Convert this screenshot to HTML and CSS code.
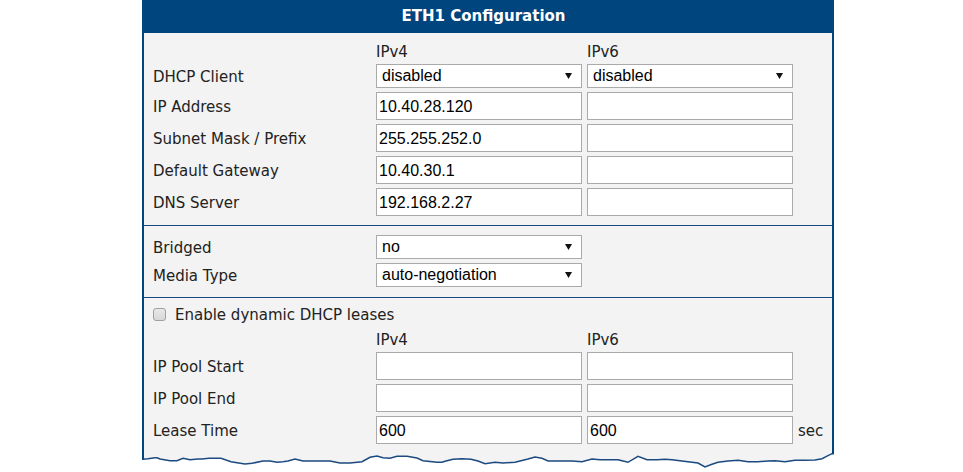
FILE: index.html
```
<!DOCTYPE html>
<html>
<head>
<meta charset="utf-8">
<link rel="stylesheet" href="styles.css">
</head>
<body>
<div class="panel">
  <div class="head">ETH1 Configuration</div>
  <div class="body">
    <div class="section s1">
      <div class="grid">
        <div></div><div class="colhead">IPv4</div><div class="colhead">IPv6</div><div></div>
        <div class="label">DHCP Client</div>
        <div class="select"><span>disabled</span><svg class="arrow" width="7" height="6" viewBox="0 0 7 6"><polygon points="0,0 7,0 3.5,6" fill="#111"/></svg></div>
        <div class="select"><span>disabled</span><svg class="arrow" width="7" height="6" viewBox="0 0 7 6"><polygon points="0,0 7,0 3.5,6" fill="#111"/></svg></div>
        <div></div>
        <div class="label">IP Address</div><div class="input">10.40.28.120</div><div class="input"></div><div></div>
        <div class="label">Subnet Mask / Prefix</div><div class="input">255.255.252.0</div><div class="input"></div><div></div>
        <div class="label">Default Gateway</div><div class="input">10.40.30.1</div><div class="input"></div><div></div>
        <div class="label">DNS Server</div><div class="input">192.168.2.27</div><div class="input"></div><div></div>
      </div>
    </div>
    <div class="section s2">
      <div class="grid">
        <div class="label">Bridged</div>
        <div class="select"><span>no</span><svg class="arrow" width="7" height="6" viewBox="0 0 7 6"><polygon points="0,0 7,0 3.5,6" fill="#111"/></svg></div>
        <div></div><div></div>
        <div class="label">Media Type</div>
        <div class="select"><span>auto-negotiation</span><svg class="arrow" width="7" height="6" viewBox="0 0 7 6"><polygon points="0,0 7,0 3.5,6" fill="#111"/></svg></div>
        <div></div><div></div>
      </div>
    </div>
    <div class="section s3">
      <div class="grid">
        <label class="check"><input type="checkbox" class="box"><span>Enable dynamic DHCP leases</span></label>
        <div></div><div class="colhead">IPv4</div><div class="colhead">IPv6</div><div></div>
        <div class="label">IP Pool Start</div><div class="input"></div><div class="input"></div><div></div>
        <div class="label">IP Pool End</div><div class="input"></div><div class="input"></div><div></div>
        <div class="label">Lease Time</div><div class="input">600</div><div class="input">600</div><div class="unit">sec</div>
      </div>
    </div>
  </div>
  <svg class="torn" width="692" height="16" viewBox="0 0 692 16">
    <polygon fill="#f3f3f3" points="0,0 692,0 692,0.7 690,0.7 686,2.7 680,5.7 673,7 663,7.3 653,7.3 643,8.7 633,7.8 626,8 616,8.7 606,8.7 596,7.3 586,8 576,9.3 570,11.3 563,14 556,10 550,9.3 540,8 530,6.7 523,6.3 515,6.7 505,6.7 496,3.3 486,9.3 476,6.7 470,6.7 458,6.7 450,6 440,8.7 430,8 423,8 413,8 406,8 400,5.3 393,4 386,6 373,9.3 361,10 353,9.3 343,10.7 336,8 329,6.3 320,5.7 311,6.3 303,8.3 300,9.3 295,9.3 281,7.7 275,5 265,3.3 255,3.3 248,5.3 241,4.7 235,3 228,4.3 220,8.7 208,10 198,10 188,8 181,8 168,8 161,8 153,6 146,8 141,8.7 135,9.3 128,8 121,8 110,10.3 103,11 95,9.7 89,8.7 79,5.3 67,5.3 60,6 56,6 48,6.7 41,5.3 35,7.7 28,7.7 18,6 15,4.7 13,4.7 6,5.7 0,6.3"/>
    <polyline fill="none" stroke="#1b4a80" stroke-width="1.5" points="692,0 692,0.7 690,0.7 686,2.7 680,5.7 673,7 663,7.3 653,7.3 643,8.7 633,7.8 626,8 616,8.7 606,8.7 596,7.3 586,8 576,9.3 570,11.3 563,14 556,10 550,9.3 540,8 530,6.7 523,6.3 515,6.7 505,6.7 496,3.3 486,9.3 476,6.7 470,6.7 458,6.7 450,6 440,8.7 430,8 423,8 413,8 406,8 400,5.3 393,4 386,6 373,9.3 361,10 353,9.3 343,10.7 336,8 329,6.3 320,5.7 311,6.3 303,8.3 300,9.3 295,9.3 281,7.7 275,5 265,3.3 255,3.3 248,5.3 241,4.7 235,3 228,4.3 220,8.7 208,10 198,10 188,8 181,8 168,8 161,8 153,6 146,8 141,8.7 135,9.3 128,8 121,8 110,10.3 103,11 95,9.7 89,8.7 79,5.3 67,5.3 60,6 56,6 48,6.7 41,5.3 35,7.7 28,7.7 18,6 15,4.7 13,4.7 6,5.7 0,6.3"/>
    <line x1="1" y1="0" x2="1" y2="6.5" stroke="#00457e" stroke-width="2"/>
    <line x1="691" y1="0" x2="691" y2="1" stroke="#00457e" stroke-width="2"/>
  </svg>
</div>
</body>
</html>
```
FILE: styles.css
```
html, body {
  margin: 0;
  padding: 0;
  background: #ffffff;
}
.panel {
  margin-left: 142px;
  width: 692px;
  font-family: "DejaVu Sans", Verdana, sans-serif;
  font-size: 15px;
  color: #222;
}
.head {
  height: 33px;
  background: #00457e;
  color: #fff;
  font-weight: bold;
  font-size: 15px;
  line-height: 33px;
  text-align: center;
  padding-right: 9px;
}
.body {
  background: #f3f3f3;
  border-left: 2px solid #00457e;
  border-right: 2px solid #00457e;
}
.section {
  padding-left: 9px;
}
.s1 {
  padding-top: 9px;
  padding-bottom: 9px;
  border-bottom: 1px solid #1b4a80;
}
.s2 {
  padding-top: 9px;
  padding-bottom: 10px;
  border-bottom: 1px solid #1b4a80;
}
.s3 {
  padding-top: 5px;
  padding-bottom: 10px;
}
.grid {
  display: grid;
  grid-template-columns: 218px 206px 206px auto;
  column-gap: 5px;
  row-gap: 4px;
  align-items: center;
}
.colhead {
  height: 18px;
  line-height: 20px;
}
.label {
  line-height: 20px;
  padding-top: 2px;
}
.select {
  box-sizing: border-box;
  height: 24px;
  background: #fff;
  border: 1px solid #aaa;
  display: flex;
  align-items: center;
  justify-content: space-between;
  padding: 0 9px 0 5px;
  font-family: "Liberation Sans", Arial, sans-serif;
  font-size: 16px;
  color: #000;
}
.arrow {
  display: block;
}
.input {
  box-sizing: border-box;
  height: 28px;
  background: #fff;
  border: 1px solid #aaa;
  padding: 0 2px;
  line-height: 27px;
  font-family: "Liberation Sans", Arial, sans-serif;
  font-size: 16px;
  color: #000;
}
.unit {
  line-height: 20px;
  padding-top: 2px;
}
.check {
  grid-column: 1 / -1;
  height: 23px;
  display: flex;
  align-items: center;
}
.box {
  appearance: none;
  -webkit-appearance: none;
  box-sizing: border-box;
  width: 13px;
  height: 13px;
  margin: 0 9px 0 0;
  border: 1px solid #a0a0a0;
  border-radius: 3px;
  background: linear-gradient(#e8e8e8, #d8d8d8);
}
.torn {
  display: block;
  margin-top: -1px;
}
```
